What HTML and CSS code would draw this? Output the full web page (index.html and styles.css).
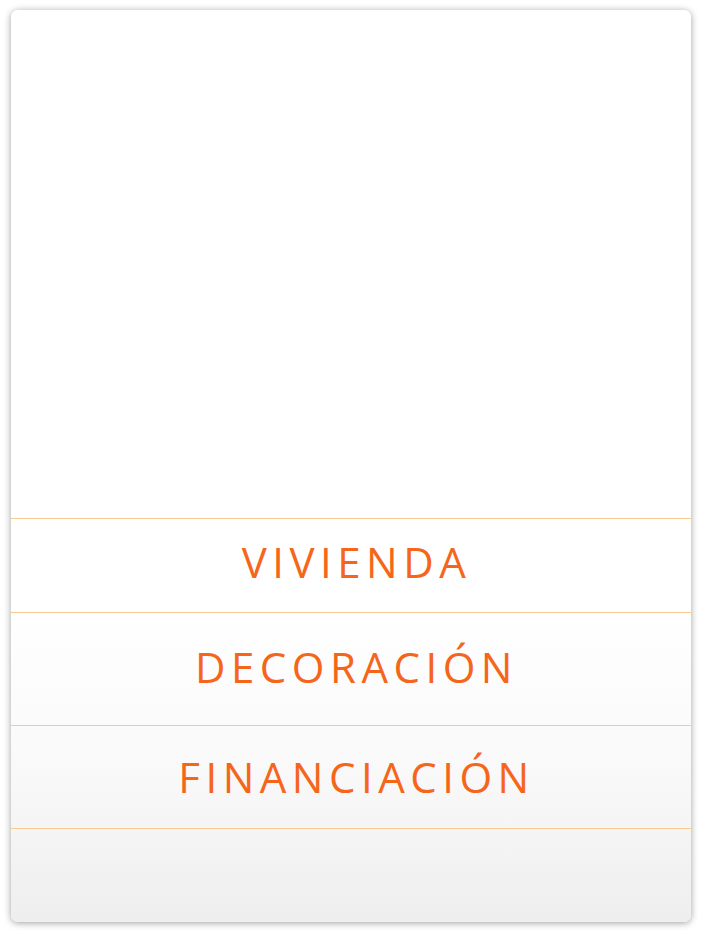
FILE: index.html
```html
<!DOCTYPE html>
<html lang="es">
<head>
<meta charset="utf-8">
<title>Menú</title>
<link rel="stylesheet" href="styles.css">
</head>
<body>
<div class="card">
  <div class="hero"></div>
  <nav class="menu">
    <a class="item item-1" href="#">VIVIENDA</a>
    <a class="item item-2" href="#">DECORACIÓN</a>
    <a class="item item-3" href="#">FINANCIACIÓN</a>
  </nav>
  <div class="footer"></div>
</div>
</body>
</html>
```
FILE: styles.css
```css
html, body {
  margin: 0;
  padding: 0;
  background: #ffffff;
}
body {
  padding: 10px 10px 10px 11px;
  font-family: "Open Sans", "DejaVu Sans", sans-serif;
}
.card {
  width: 680px;
  height: 912px;
  border-radius: 7px;
  background: linear-gradient(to bottom, #ffffff 0px, #ffffff 600px, #f9f9f9 760px, #eeeeee 912px);
  box-shadow: 0 1px 7px rgba(0, 0, 0, 0.38);
  display: flex;
  flex-direction: column;
  overflow: hidden;
}
.hero {
  height: 508px;
}
.menu {
  display: flex;
  flex-direction: column;
}
.item {
  display: flex;
  align-items: center;
  justify-content: center;
  border-top: 1px solid #fbc98f;
  color: #f5651a;
  text-decoration: none;
  font-size: 42px;
  line-height: 1;
  letter-spacing: 5.5px;
  padding-left: 11px;
  box-sizing: border-box;
}
.item-1 {
  height: 94px;
  padding-bottom: 7px;
}
.item-2 {
  height: 113px;
  padding-bottom: 5px;
}
.item-3 {
  height: 103px;
}
.footer {
  flex: 1;
  border-top: 1px solid #fbc98f;
}
```
